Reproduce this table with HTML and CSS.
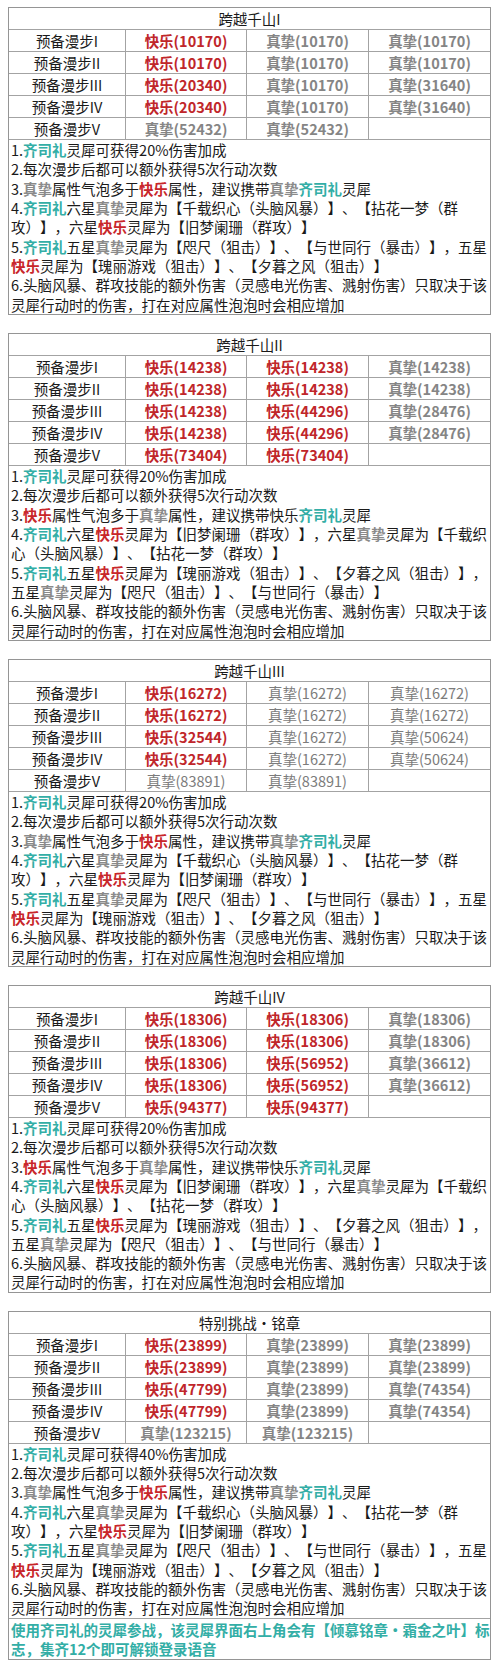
FILE: index.html
```html
<!DOCTYPE html>
<html lang="zh-CN">
<head>
<meta charset="utf-8">
<title>跨越千山</title>
<link rel="stylesheet" href="styles.css">
</head>
<body>
<div class="page">

  <section class="card">
    <div class="title">跨越千山I</div>
    <div class="row"><div class="cell">预备漫步I</div><div class="cell red">快乐(10170)</div><div class="cell gray">真挚(10170)</div><div class="cell gray">真挚(10170)</div></div>
    <div class="row"><div class="cell">预备漫步II</div><div class="cell red">快乐(10170)</div><div class="cell gray">真挚(10170)</div><div class="cell gray">真挚(10170)</div></div>
    <div class="row"><div class="cell">预备漫步III</div><div class="cell red">快乐(20340)</div><div class="cell gray">真挚(10170)</div><div class="cell gray">真挚(31640)</div></div>
    <div class="row"><div class="cell">预备漫步IV</div><div class="cell red">快乐(20340)</div><div class="cell gray">真挚(10170)</div><div class="cell gray">真挚(31640)</div></div>
    <div class="row"><div class="cell">预备漫步V</div><div class="cell gray">真挚(52432)</div><div class="cell gray">真挚(52432)</div><div class="cell"></div></div>
    <div class="notes">
      <p>1.<b class="t">齐司礼</b>灵犀可获得20%伤害加成</p>
      <p>2.每次漫步后都可以额外获得5次行动次数</p>
      <p>3.<b class="g">真挚</b>属性气泡多于<b class="r">快乐</b>属性，建议携带<b class="g">真挚</b><b class="t">齐司礼</b>灵犀</p>
      <p>4.<b class="t">齐司礼</b>六星<b class="g">真挚</b>灵犀为【千载织心（头脑风暴）】、【拈花一梦（群攻）】，六星<b class="r">快乐</b>灵犀为【旧梦阑珊（群攻）】</p>
      <p>5.<b class="t">齐司礼</b>五星<b class="g">真挚</b>灵犀为【咫尺（狙击）】、【与世同行（暴击）】，五星<b class="r">快乐</b>灵犀为【瑰丽游戏（狙击）】、【夕暮之风（狙击）】</p>
      <p>6.头脑风暴、群攻技能的额外伤害（灵感电光伤害、溅射伤害）只取决于该灵犀行动时的伤害，打在对应属性泡泡时会相应增加</p>
    </div>
  </section>

  <section class="card">
    <div class="title">跨越千山II</div>
    <div class="row"><div class="cell">预备漫步I</div><div class="cell red">快乐(14238)</div><div class="cell red">快乐(14238)</div><div class="cell gray">真挚(14238)</div></div>
    <div class="row"><div class="cell">预备漫步II</div><div class="cell red">快乐(14238)</div><div class="cell red">快乐(14238)</div><div class="cell gray">真挚(14238)</div></div>
    <div class="row"><div class="cell">预备漫步III</div><div class="cell red">快乐(14238)</div><div class="cell red">快乐(44296)</div><div class="cell gray">真挚(28476)</div></div>
    <div class="row"><div class="cell">预备漫步IV</div><div class="cell red">快乐(14238)</div><div class="cell red">快乐(44296)</div><div class="cell gray">真挚(28476)</div></div>
    <div class="row"><div class="cell">预备漫步V</div><div class="cell red">快乐(73404)</div><div class="cell red">快乐(73404)</div><div class="cell"></div></div>
    <div class="notes">
      <p>1.<b class="t">齐司礼</b>灵犀可获得20%伤害加成</p>
      <p>2.每次漫步后都可以额外获得5次行动次数</p>
      <p>3.<b class="r">快乐</b>属性气泡多于<b class="g">真挚</b>属性，建议携带快乐<b class="t">齐司礼</b>灵犀</p>
      <p>4.<b class="t">齐司礼</b>六星<b class="r">快乐</b>灵犀为【旧梦阑珊（群攻）】，六星<b class="g">真挚</b>灵犀为【千载织心（头脑风暴）】、【拈花一梦（群攻）】</p>
      <p>5.<b class="t">齐司礼</b>五星<b class="r">快乐</b>灵犀为【瑰丽游戏（狙击）】、【夕暮之风（狙击）】，五星<b class="g">真挚</b>灵犀为【咫尺（狙击）】、【与世同行（暴击）】</p>
      <p>6.头脑风暴、群攻技能的额外伤害（灵感电光伤害、溅射伤害）只取决于该灵犀行动时的伤害，打在对应属性泡泡时会相应增加</p>
    </div>
  </section>

  <section class="card">
    <div class="title">跨越千山III</div>
    <div class="row"><div class="cell">预备漫步I</div><div class="cell red">快乐(16272)</div><div class="cell gray light">真挚(16272)</div><div class="cell gray light">真挚(16272)</div></div>
    <div class="row"><div class="cell">预备漫步II</div><div class="cell red">快乐(16272)</div><div class="cell gray light">真挚(16272)</div><div class="cell gray light">真挚(16272)</div></div>
    <div class="row"><div class="cell">预备漫步III</div><div class="cell red">快乐(32544)</div><div class="cell gray light">真挚(16272)</div><div class="cell gray light">真挚(50624)</div></div>
    <div class="row"><div class="cell">预备漫步IV</div><div class="cell red">快乐(32544)</div><div class="cell gray light">真挚(16272)</div><div class="cell gray light">真挚(50624)</div></div>
    <div class="row"><div class="cell">预备漫步V</div><div class="cell gray light">真挚(83891)</div><div class="cell gray light">真挚(83891)</div><div class="cell"></div></div>
    <div class="notes">
      <p>1.<b class="t">齐司礼</b>灵犀可获得20%伤害加成</p>
      <p>2.每次漫步后都可以额外获得5次行动次数</p>
      <p>3.<b class="g">真挚</b>属性气泡多于<b class="r">快乐</b>属性，建议携带<b class="g">真挚</b><b class="t">齐司礼</b>灵犀</p>
      <p>4.<b class="t">齐司礼</b>六星<b class="g">真挚</b>灵犀为【千载织心（头脑风暴）】、【拈花一梦（群攻）】，六星<b class="r">快乐</b>灵犀为【旧梦阑珊（群攻）】</p>
      <p>5.<b class="t">齐司礼</b>五星<b class="g">真挚</b>灵犀为【咫尺（狙击）】、【与世同行（暴击）】，五星<b class="r">快乐</b>灵犀为【瑰丽游戏（狙击）】、【夕暮之风（狙击）】</p>
      <p>6.头脑风暴、群攻技能的额外伤害（灵感电光伤害、溅射伤害）只取决于该灵犀行动时的伤害，打在对应属性泡泡时会相应增加</p>
    </div>
  </section>

  <section class="card">
    <div class="title">跨越千山IV</div>
    <div class="row"><div class="cell">预备漫步I</div><div class="cell red">快乐(18306)</div><div class="cell red">快乐(18306)</div><div class="cell gray">真挚(18306)</div></div>
    <div class="row"><div class="cell">预备漫步II</div><div class="cell red">快乐(18306)</div><div class="cell red">快乐(18306)</div><div class="cell gray">真挚(18306)</div></div>
    <div class="row"><div class="cell">预备漫步III</div><div class="cell red">快乐(18306)</div><div class="cell red">快乐(56952)</div><div class="cell gray">真挚(36612)</div></div>
    <div class="row"><div class="cell">预备漫步IV</div><div class="cell red">快乐(18306)</div><div class="cell red">快乐(56952)</div><div class="cell gray">真挚(36612)</div></div>
    <div class="row"><div class="cell">预备漫步V</div><div class="cell red">快乐(94377)</div><div class="cell red">快乐(94377)</div><div class="cell"></div></div>
    <div class="notes">
      <p>1.<b class="t">齐司礼</b>灵犀可获得20%伤害加成</p>
      <p>2.每次漫步后都可以额外获得5次行动次数</p>
      <p>3.<b class="r">快乐</b>属性气泡多于<b class="g">真挚</b>属性，建议携带快乐<b class="t">齐司礼</b>灵犀</p>
      <p>4.<b class="t">齐司礼</b>六星<b class="r">快乐</b>灵犀为【旧梦阑珊（群攻）】，六星<b class="g">真挚</b>灵犀为【千载织心（头脑风暴）】、【拈花一梦（群攻）】</p>
      <p>5.<b class="t">齐司礼</b>五星<b class="r">快乐</b>灵犀为【瑰丽游戏（狙击）】、【夕暮之风（狙击）】，五星<b class="g">真挚</b>灵犀为【咫尺（狙击）】、【与世同行（暴击）】</p>
      <p>6.头脑风暴、群攻技能的额外伤害（灵感电光伤害、溅射伤害）只取决于该灵犀行动时的伤害，打在对应属性泡泡时会相应增加</p>
    </div>
  </section>

  <section class="card">
    <div class="title">特别挑战•铭章</div>
    <div class="row"><div class="cell">预备漫步I</div><div class="cell red">快乐(23899)</div><div class="cell gray">真挚(23899)</div><div class="cell gray">真挚(23899)</div></div>
    <div class="row"><div class="cell">预备漫步II</div><div class="cell red">快乐(23899)</div><div class="cell gray">真挚(23899)</div><div class="cell gray">真挚(23899)</div></div>
    <div class="row"><div class="cell">预备漫步III</div><div class="cell red">快乐(47799)</div><div class="cell gray">真挚(23899)</div><div class="cell gray">真挚(74354)</div></div>
    <div class="row"><div class="cell">预备漫步IV</div><div class="cell red">快乐(47799)</div><div class="cell gray">真挚(23899)</div><div class="cell gray">真挚(74354)</div></div>
    <div class="row"><div class="cell">预备漫步V</div><div class="cell gray">真挚(123215)</div><div class="cell gray">真挚(123215)</div><div class="cell"></div></div>
    <div class="notes">
      <p>1.<b class="t">齐司礼</b>灵犀可获得40%伤害加成</p>
      <p>2.每次漫步后都可以额外获得5次行动次数</p>
      <p>3.<b class="g">真挚</b>属性气泡多于<b class="r">快乐</b>属性，建议携带<b class="g">真挚</b><b class="t">齐司礼</b>灵犀</p>
      <p>4.<b class="t">齐司礼</b>六星<b class="g">真挚</b>灵犀为【千载织心（头脑风暴）】、【拈花一梦（群攻）】，六星<b class="r">快乐</b>灵犀为【旧梦阑珊（群攻）】</p>
      <p>5.<b class="t">齐司礼</b>五星<b class="g">真挚</b>灵犀为【咫尺（狙击）】、【与世同行（暴击）】，五星<b class="r">快乐</b>灵犀为【瑰丽游戏（狙击）】、【夕暮之风（狙击）】</p>
      <p>6.头脑风暴、群攻技能的额外伤害（灵感电光伤害、溅射伤害）只取决于该灵犀行动时的伤害，打在对应属性泡泡时会相应增加</p>
    </div>
    <div class="footer">使用齐司礼的灵犀参战，该灵犀界面右上角会有【倾慕铭章·霜金之叶】标志，集齐12个即可解锁登录语音</div>
  </section>

</div>
</body>
</html>
```

FILE: styles.css
```css
html, body {
  margin: 0;
  padding: 0;
  background: #ffffff;
}

body {
  font-family: "Noto Sans CJK SC", "Noto Sans", sans-serif;
  font-size: 14.5px;
  color: #1a1a1a;
  text-spacing-trim: space-all;
  font-kerning: none;
}

.page {
  padding: 7px 9px 0 8px;
}

.card {
  border: 1px solid #959595;
  margin-bottom: 18px;
}

.card:last-child {
  margin-bottom: 0;
}

.title {
  height: 21px;
  line-height: 21px;
  text-align: center;
  white-space: nowrap;
}

.row {
  display: grid;
  grid-template-columns: 116px 121px 122px 1fr;
  border-top: 1px solid #a3a3a3;
}

.cell {
  box-sizing: border-box;
  height: 21px;
  line-height: 21px;
  text-align: center;
  white-space: nowrap;
  border-left: 1px solid #a3a3a3;
}

.cell:first-child {
  border-left: none;
}

.cell.red {
  color: #c0262a;
  font-weight: 700;
}

.cell.gray {
  color: #858585;
  font-weight: 700;
}

.cell.gray.light {
  font-weight: 400;
  color: #7c7c7c;
}

.notes {
  border-top: 1px solid #a3a3a3;
  padding: 0 0 0 2px;
  line-height: 19.33px;
}

.notes p {
  margin: 0;
}

.notes b {
  font-weight: 700;
}

.t {
  color: #33aea6;
}

.r {
  color: #c8262a;
}

.g {
  color: #8a8a8a;
}

.footer {
  border-top: 1px solid #a3a3a3;
  padding: 1px 0 1px 2px;
  line-height: 19.33px;
  color: #33aea6;
  font-weight: 700;
}
```
